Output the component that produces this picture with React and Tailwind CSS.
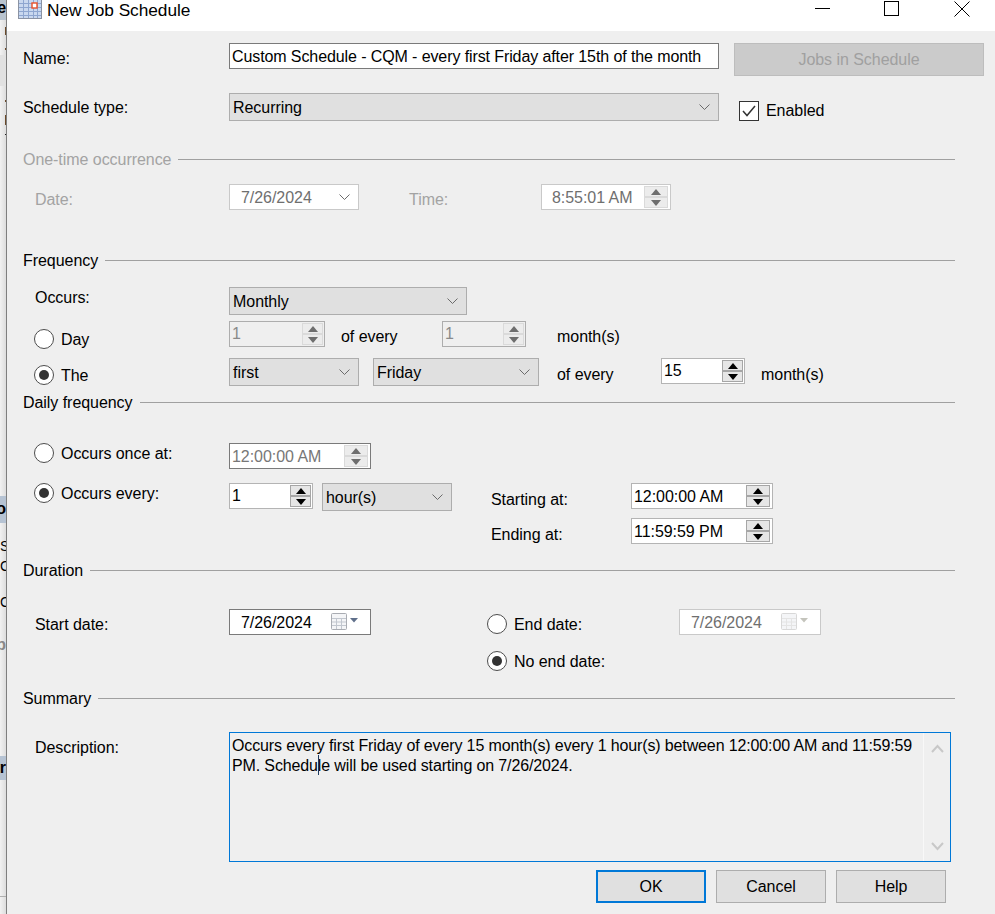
import { useState } from 'react'

const SPIN_STYLES = {
  active: {
    box: 'bg-white border-[#b4b4b4] text-black',
    btn: 'bg-[#e6e6e6] border-[#a6a6a6]',
    arrow: '#000000',
  },
  time: {
    box: 'bg-white border-[#c9c9c9] text-[#6f6f6f]',
    btn: 'bg-[#ececec] border-[#dadada]',
    arrow: '#6e6e6e',
  },
  off: {
    box: 'bg-[#efefef] border-[#adadad] text-[#8a8a8a]',
    btn: 'bg-[#ececec] border-[#dadada]',
    arrow: '#6e6e6e',
  },
  once: {
    box: 'bg-white border-[#7a7a7a] text-[#777777]',
    btn: 'bg-[#ececec] border-[#dadada]',
    arrow: '#6e6e6e',
  },
}

function Arrow({ up, color }) {
  return (
    <svg width="10" height="6" viewBox="0 0 10 6" className="block">
      <path d={up ? 'M5 0 L10 6 L0 6 Z' : 'M0 0 L10 0 L5 6 Z'} fill={color} />
    </svg>
  )
}

function Spin({ value, kind = 'active', className = '', pad = 'pl-[2px]', lift = 'mt-[1px]', wide }) {
  const s = SPIN_STYLES[kind]
  return (
    <div className={`h-[26px] border flex items-center shrink-0 ${s.box} ${className}`}>
      <span className={`flex-1 leading-[20px] ${lift} ${pad}`}>{value}</span>
      <div className={`h-[22px] flex flex-col ${wide ? 'w-[24px] mr-[2px]' : 'w-[21px] mr-[1px]'}`}>
        <div className={`h-[11px] border flex items-center justify-center ${s.btn}`}>
          <Arrow up color={s.arrow} />
        </div>
        <div className={`h-[11px] border flex items-center justify-center ${s.btn}`}>
          <Arrow color={s.arrow} />
        </div>
      </div>
    </div>
  )
}

function Chevron({ className = '' }) {
  return (
    <svg width="11" height="7" viewBox="0 0 11 7" className={className}>
      <path d="M0.5 0.5 L5.5 5.5 L10.5 0.5" fill="none" stroke="#6b6b6b" strokeWidth="1" />
    </svg>
  )
}

function Select({ value, className = '' }) {
  return (
    <div className={`h-[28px] bg-[#e0e0e0] border border-[#adadad] flex items-center justify-between pl-[3px] pr-[8px] shrink-0 ${className}`}>
      <span className="leading-[20px] mt-[2px]">{value}</span>
      <Chevron />
    </div>
  )
}

function Radio({ on, className = '' }) {
  return (
    <div className={`w-[20px] h-[20px] rounded-full bg-white border border-[#4d4d4d] flex items-center justify-center shrink-0 ${className}`}>
      {on && <div className="w-[10px] h-[10px] rounded-full bg-[#333333]" />}
    </div>
  )
}

function Label({ children, className = '' }) {
  return <span className={`block leading-[20px] whitespace-nowrap shrink-0 ${className}`}>{children}</span>
}

function Section({ title, muted, mt }) {
  return (
    <div className={`w-[932px] ml-[16px] h-[20px] flex items-center gap-[7px] ${mt}`}>
      <span className={`leading-[18px] whitespace-nowrap ${muted ? 'text-[#a3a3a3]' : ''}`}>{title}</span>
      <div className="flex-1 h-[2px] border-t border-[#a0a0a0] border-b-white" />
    </div>
  )
}

function Calendar({ faded }) {
  const line = faded ? '#e4e4e4' : '#c2c7cf'
  const edge = faded ? '#d8d8d8' : '#a9acb2'
  return (
    <svg width="34" height="18" viewBox="0 0 34 18" className="block">
      <rect x="0.5" y="0.5" width="15" height="16" rx="1" fill="#f4f5f7" stroke={edge} />
      <path d="M1 5.5 H15 M1 9 H15 M1 12.5 H15 M5.5 5 V16 M10.5 5 V16" stroke={line} fill="none" />
      <path d="M19 5 H27 L23 9.5 Z" fill={faded ? '#c4c4bc' : '#5f6f8a'} />
    </svg>
  )
}

function DateBox({ value, faded, className = '' }) {
  return (
    <div className={`h-[26px] bg-white border flex items-center pl-[11px] shrink-0 ${faded ? 'border-[#c9c9c9] text-[#6f6f6f]' : 'border-[#7a7a7a] text-black'} ${className}`}>
      <span className="w-[90px] leading-[20px] mt-[2px]">{value}</span>
      <Calendar faded={faded} />
    </div>
  )
}

function TitleIcon({ className = '' }) {
  return (
    <svg width="24" height="19" viewBox="0 0 24 19" className={`block shrink-0 ${className}`}>
      <rect x="0.5" y="-2" width="23" height="20.5" fill="#c9d8ef" stroke="#8b93a3" />
      <path d="M1 3.5 H23 M1 7.5 H23 M1 11.5 H23 M1 15.5 H23 M5.5 0 V18 M10.5 0 V18 M15.5 0 V18 M19.5 0 V18" stroke="#8ea6d0" fill="none" />
      <rect x="14" y="3" width="5" height="5" fill="#fff" stroke="#e8502a" strokeWidth="1.4" />
    </svg>
  )
}

// sliver of the window behind the dialog
function BackStrip() {
  return (
    <div className="w-[6px] h-[914px] shrink-0 overflow-hidden flex flex-col bg-gradient-to-r from-[#f2f2f2] to-[#dddddd] text-black font-bold">
      <div className="h-[20px] bg-[#b9c4cf] flex justify-end leading-[16px]">e</div>
      <div className="h-[7px]" />
      <div className="h-[8px] w-px self-end bg-[#6b4a2a]" />
      <div className="h-[13px]" />
      <div className="h-[2px] w-px self-end bg-[#6b4a2a]" />
      <div className="h-[5px]" />
      <div className="h-[31px] bg-[#e1e1e1]" />
      <div className="h-[14px]" />
      <div className="h-[2px] w-px self-end bg-[#6b4a2a]" />
      <div className="h-[13px]" />
      <div className="h-[10px] w-px self-end bg-[#6b4a2a]" />
      <div className="h-[9px]" />
      <div className="h-px w-px self-end bg-[#222222]" />
      <div className="h-[361px]" />
      <div className="h-[27px] bg-[#b6c3d3] flex justify-end leading-[26px]">o</div>
      <div className="h-[15px]" />
      <div className="h-[16px] leading-[16px] font-normal text-[14px]">S</div>
      <div className="h-[4px]" />
      <div className="h-[16px] leading-[16px] font-normal text-[14px]">C</div>
      <div className="h-[20px]" />
      <div className="h-[16px] leading-[16px] font-normal text-[14px]">C</div>
      <div className="h-[24px]" />
      <div className="h-[24px] flex justify-end leading-[22px] text-[#8a8a8a]">p</div>
      <div className="h-[98px]" />
      <div className="h-[24px] bg-[#b6c3d3] flex justify-end leading-[24px]">r</div>
      <div className="h-[116px]" />
      <div className="flex-1 border-t border-[#b0b0b0]" />
    </div>
  )
}

function Button({ children, primary }) {
  return (
    <div className={`w-[110px] h-[33px] bg-[#e0e0e0] flex items-center justify-center ${primary ? 'border-2 border-[#0078d7]' : 'border border-[#adadad]'}`}>
      {children}
    </div>
  )
}

export default function App() {
  const [enabled] = useState(true)

  return (
    <div className="w-[995px] h-[914px] overflow-hidden flex bg-white text-[16px] tracking-[-0.05px] text-black font-['Liberation_Sans',Arial,sans-serif]">
      <BackStrip />
      <div className="w-[1px] bg-[#7f7f7f] shrink-0" />
      <div className="flex-1 flex flex-col min-w-0">
        <div className="h-[31px] bg-white flex items-start shrink-0">
          <TitleIcon className="ml-[11px]" />
          <span className="ml-[5px] text-[17.3px] leading-[20px] whitespace-nowrap">New Job Schedule</span>
          <div className="ml-auto flex items-start">
            <div className="w-[15px] h-px bg-black mt-[8px]" />
            <div className="w-[15px] h-[15px] border border-black ml-[54px] mt-[1px]" />
            <svg width="16" height="16" viewBox="0 0 16 16" className="ml-[55px] mr-[25px] mt-[1px]">
              <path d="M0.5 0.5 L15.5 15.5 M15.5 0.5 L0.5 15.5" stroke="#000" fill="none" />
            </svg>
          </div>
        </div>

        <div className="flex-1 bg-[#efefef] flex flex-col">
          <div className="flex items-start pl-[16px] mt-[12px]">
            <Label className="w-[206px] mt-[6px]">Name:</Label>
            <div className="w-[490px] h-[26px] bg-white border border-[#7a7a7a] pl-[2px] leading-[24px] tracking-[-0.1px] whitespace-nowrap overflow-hidden">
              <span className="block mt-[1px]">Custom Schedule - CQM - every first Friday after 15th of the month</span>
            </div>
            <div className="w-[250px] h-[33px] ml-[15px] bg-[#cbcbcb] border border-[#bdbdbd] text-[#a0a0a0] flex items-center justify-center">
              Jobs in Schedule
            </div>
          </div>

          <div className="flex items-start pl-[16px] mt-[17px]">
            <Label className="w-[206px] mt-[5px]">Schedule type:</Label>
            <Select value="Recurring" className="w-[490px]" />
            <div className="w-[20px] h-[20px] ml-[20px] mt-[8px] bg-white border border-[#333333] flex items-center justify-center">
              {enabled && (
                <svg width="14" height="12" viewBox="0 0 14 12">
                  <path d="M1 6 L5 10.5 L13 1" fill="none" stroke="#333333" strokeWidth="1.5" />
                </svg>
              )}
            </div>
            <Label className="ml-[7px] mt-[8px]">Enabled</Label>
          </div>

          <Section title="One-time occurrence" muted mt="mt-[29px]" />
          <div className="flex items-start pl-[28px] mt-[14px] text-[#a3a3a3]">
            <Label className="w-[194px] mt-[6px]">Date:</Label>
            <div className="w-[130px] h-[26px] bg-white border border-[#c9c9c9] text-[#6f6f6f] flex items-center justify-between pl-[11px] pr-[8px]">
              <span className="leading-[20px] mt-[2px]">7/26/2024</span>
              <Chevron />
            </div>
            <Label className="w-[132px] ml-[50px] mt-[6px]">Time:</Label>
            <Spin value="8:55:01 AM" kind="time" pad="pl-[10px]" wide className="w-[130px]" />
          </div>

          <Section title="Frequency" mt="mt-[41px]" />
          <div className="flex items-start pl-[28px] mt-[16px]">
            <Label className="w-[194px] mt-[1px]">Occurs:</Label>
            <Select value="Monthly" className="w-[238px]" />
          </div>
          <div className="flex items-start pl-[27px] mt-[6px]">
            <Radio className="mt-[8px]" />
            <Label className="w-[168px] ml-[7px] mt-[9px]">Day</Label>
            <Spin value="1" kind="off" lift="-mt-[1px]" className="w-[96px]" />
            <Label className="w-[101px] ml-[16px] mt-[6px]">of every</Label>
            <Spin value="1" kind="off" lift="-mt-[1px]" className="w-[84px]" />
            <Label className="ml-[31px] mt-[6px]">month(s)</Label>
          </div>
          <div className="flex items-start pl-[27px] mt-[8px]">
            <Radio on className="mt-[7px]" />
            <Label className="w-[168px] ml-[7px] mt-[8px]">The</Label>
            <Select value="first" className="w-[130px]" />
            <Select value="Friday" className="w-[166px] ml-[14px]" />
            <Label className="w-[104px] ml-[18px] mt-[7px]">of every</Label>
            <Spin value="15" lift="mt-0" className="w-[84px]" />
            <Label className="ml-[16px] mt-[7px]">month(s)</Label>
          </div>

          <Section title="Daily frequency" mt="mt-[7px]" />
          <div className="flex items-start pl-[27px] mt-[30px]">
            <Radio />
            <Label className="w-[168px] ml-[7px] mt-[1px]">Occurs once at:</Label>
            <Spin value="12:00:00 AM" kind="once" wide className="w-[142px]" />
          </div>
          <div className="flex items-start pl-[27px] mt-[14px]">
            <Radio on />
            <Label className="w-[168px] ml-[7px] mt-[1px]">Occurs every:</Label>
            <Spin value="1" lift="mt-0" className="w-[84px]" />
            <Select value="hour(s)" className="w-[130px] ml-[9px]" />
            <Label className="w-[140px] ml-[39px] mt-[7px]">Starting at:</Label>
            <Spin value="12:00:00 AM" wide className="w-[142px]" />
          </div>
          <div className="flex items-start pl-[484px] mt-[7px]">
            <Label className="w-[140px] mt-[7px]">Ending at:</Label>
            <Spin value="11:59:59 PM" lift="mt-[2px]" wide className="w-[142px]" />
          </div>

          <Section title="Duration" mt="mt-[16px]" />
          <div className="flex items-start pl-[28px] mt-[28px]">
            <Label className="w-[194px] mt-[6px]">Start date:</Label>
            <DateBox value="7/26/2024" className="w-[142px]" />
            <Radio className="ml-[116px] mt-[5px]" />
            <Label className="w-[165px] ml-[7px] mt-[6px]">End date:</Label>
            <DateBox value="7/26/2024" faded className="w-[142px]" />
          </div>
          <div className="flex items-start pl-[480px] mt-[16px]">
            <Radio on />
            <Label className="ml-[7px] mt-[1px]">No end date:</Label>
          </div>

          <Section title="Summary" mt="mt-[17px]" />
          <div className="flex items-start pl-[28px] mt-[23px]">
            <Label className="w-[194px] mt-[6px]">Description:</Label>
            <div className="w-[722px] h-[130px] border border-[#0078d7] bg-[#efefef] flex">
              <div className="relative flex-1 pl-[2px] pt-[3px] leading-[20px] tracking-[-0.13px]">
                <p>
                  Occurs every first Friday of every 15 month(s) every 1 hour(s) between 12:00:00 AM and 11:59:59
                  <br />
                  PM. Schedule will be used starting on 7/26/2024.
                </p>
                <div className="absolute left-[88px] top-[22px] w-px h-[20px] bg-[#1f3a5f]" />
              </div>
              <div className="w-[27px] border-l border-[#f8f8f8] flex flex-col items-center justify-between pt-[11px] pb-[10px]">
                <svg width="13" height="9" viewBox="0 0 13 9">
                  <path d="M1 8 L6.5 2 L12 8" fill="none" stroke="#c8c8c8" strokeWidth="2" />
                </svg>
                <svg width="13" height="9" viewBox="0 0 13 9">
                  <path d="M1 1 L6.5 7 L12 1" fill="none" stroke="#c8c8c8" strokeWidth="2" />
                </svg>
              </div>
            </div>
          </div>

          <div className="flex gap-[10px] pl-[589px] mt-[8px]">
            <Button primary>OK</Button>
            <Button>Cancel</Button>
            <Button>Help</Button>
          </div>
        </div>
      </div>
    </div>
  )
}
